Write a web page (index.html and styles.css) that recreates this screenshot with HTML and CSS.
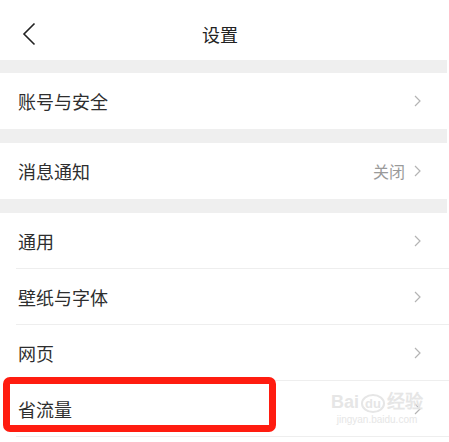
FILE: index.html
```html
<!DOCTYPE html>
<html lang="zh-CN">
<head>
  <meta charset="UTF-8">
  <title>设置</title>
  <link rel="stylesheet" href="styles.css">
</head>
<body>

  <header class="topbar">
    <svg class="back" width="14" height="24" viewBox="0 0 14 24">
      <path d="M12.5 1.5 L2 12 L12.5 22.5" fill="none" stroke="#222" stroke-width="1.6"/>
    </svg>
    <h1>设置</h1>
  </header>

  <div class="gap first"></div>

  <section class="group">
    <div class="row single">
      <span class="label">账号与安全</span>
      <span class="more"><svg class="chev" width="7" height="12" viewBox="0 0 7 12"><path d="M1 1 L6 6 L1 11" fill="none" stroke="#b4b4b4" stroke-width="1.2"/></svg></span>
    </div>
  </section>

  <div class="gap"></div>

  <section class="group">
    <div class="row single">
      <span class="label">消息通知</span>
      <span class="more"><span class="value">关闭</span><svg class="chev" width="7" height="12" viewBox="0 0 7 12"><path d="M1 1 L6 6 L1 11" fill="none" stroke="#b4b4b4" stroke-width="1.2"/></svg></span>
    </div>
  </section>

  <div class="gap"></div>

  <section class="group">
    <div class="row">
      <span class="label">通用</span>
      <span class="more"><svg class="chev" width="7" height="12" viewBox="0 0 7 12"><path d="M1 1 L6 6 L1 11" fill="none" stroke="#b4b4b4" stroke-width="1.2"/></svg></span>
    </div>
    <div class="row">
      <span class="label">壁纸与字体</span>
      <span class="more"><svg class="chev" width="7" height="12" viewBox="0 0 7 12"><path d="M1 1 L6 6 L1 11" fill="none" stroke="#b4b4b4" stroke-width="1.2"/></svg></span>
    </div>
    <div class="row">
      <span class="label">网页</span>
      <span class="more"><svg class="chev" width="7" height="12" viewBox="0 0 7 12"><path d="M1 1 L6 6 L1 11" fill="none" stroke="#b4b4b4" stroke-width="1.2"/></svg></span>
    </div>
    <div class="row marked">
      <span class="label">省流量</span>
      <span class="more"><svg class="chev" width="7" height="12" viewBox="0 0 7 12"><path d="M1 1 L6 6 L1 11" fill="none" stroke="#b4b4b4" stroke-width="1.2"/></svg></span>
      <div class="highlight"></div>
      <div class="watermark">
        <span class="wm-logo">Bai<b>du</b>经验</span>
        <span class="wm-url">jingyan.baidu.com</span>
      </div>
    </div>
  </section>

</body>
</html>
```

FILE: styles.css
```css
body {
  margin: 0;
  background: #fff;
  font-family: "Noto Sans CJK SC", "Noto Sans", sans-serif;
  color: #333;
  width: 449px;
  overflow: hidden;
}
.topbar {
  height: 60px;
  display: flex;
  align-items: center;
  justify-content: center;
  position: relative;
}
.topbar h1 {
  margin: 8px 9px 0 0;
  font-size: 18px;
  font-weight: normal;
  color: #222;
}
.back {
  position: absolute;
  left: 22px;
  top: 22px;
}
.gap {
  height: 14px;
  background: #efefef;
  margin-right: 2px;
}
.gap.first { height: 13px; }
.group {
  padding-left: 16px;
}
.row {
  height: 55px;
  border-bottom: 1px solid #eeeeee;
  display: flex;
  align-items: center;
  justify-content: space-between;
  padding-right: 28px;
  position: relative;
}
.row.single {
  height: 56px;
  border-bottom: none;
}
.label {
  font-size: 18px;
  padding-left: 2px;
  color: #2e2e2e;
}
.more {
  display: flex;
  align-items: center;
  gap: 9px;
}
.value {
  font-size: 16px;
  color: #9a9a9a;
}
.chev { display: block; }
.highlight {
  position: absolute;
  left: -13px;
  top: -4px;
  width: 273px;
  height: 55px;
  box-sizing: border-box;
  border: 7px solid #ff1c10;
  border-radius: 7px;
}
.watermark {
  position: absolute;
  left: 317px;
  top: 12px;
  width: 88px;
  display: flex;
  flex-direction: column;
  align-items: center;
  color: #e6e6e6;
  font-family: "Liberation Sans", sans-serif;
  line-height: 1;
}
.wm-logo {
  font-size: 18px;
  font-weight: bold;
  white-space: nowrap;
}
.wm-logo b {
  font-size: 13px;
  border: 2px solid #e6e6e6;
  border-radius: 50%;
  padding: 0 2px;
  margin: 0 2px;
}
.wm-url {
  font-size: 10px;
  margin-top: 4px;
  white-space: nowrap;
}
```
